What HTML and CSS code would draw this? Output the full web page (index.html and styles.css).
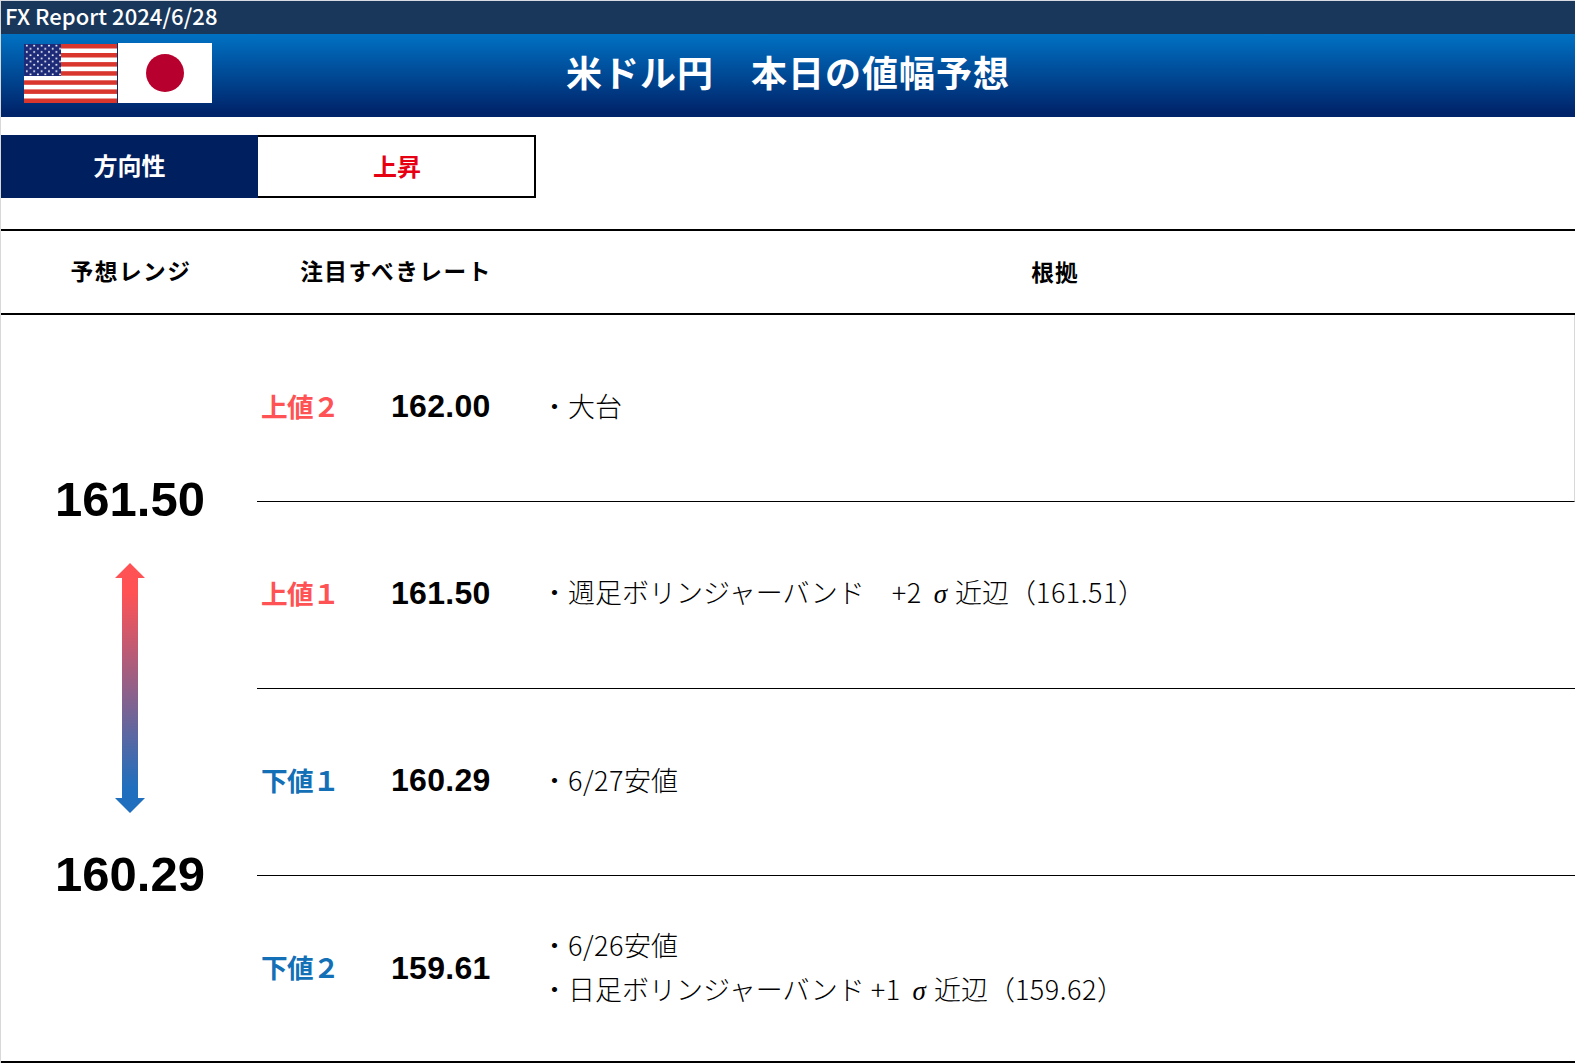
FILE: index.html
```html
<!DOCTYPE html>
<html lang="ja">
<head>
<meta charset="utf-8">
<title>FX Report</title>
<link rel="stylesheet" href="styles.css">
</head>
<body>
<div class="page">
  <div class="topbar">FX Report 2024/6/28</div>
  <header class="hero">
    <div class="flags">
      <svg class="flag-us" width="94" height="60" viewBox="0 0 94 60">
        <defs>
          <pattern id="stars" width="7.4" height="6.4" patternUnits="userSpaceOnUse" x="1" y="1">
            <circle cx="1.8" cy="1.6" r="1" fill="#fff"/>
            <circle cx="5.5" cy="4.8" r="1" fill="#fff"/>
          </pattern>
        </defs>
        <rect x="0" y="1" width="93" height="59" fill="#fff"/>
        <g fill="#d9362e">
          <rect x="0" y="1" width="93" height="4.5"/>
          <rect x="0" y="10" width="93" height="4.5"/>
          <rect x="0" y="19.1" width="93" height="4.5"/>
          <rect x="0" y="28.2" width="93" height="4.5"/>
          <rect x="0" y="37.3" width="93" height="4.5"/>
          <rect x="0" y="46.4" width="93" height="4.5"/>
          <rect x="0" y="55.5" width="93" height="4.5"/>
        </g>
        <rect x="0" y="1" width="37" height="32" fill="#1c2a78"/>
        <rect x="0" y="1" width="37" height="32" fill="url(#stars)"/>
        <rect x="93" y="0" width="1" height="60" fill="#0b2a63"/>
      </svg>
      <svg class="flag-jp" width="94" height="60" viewBox="0 0 94 60">
        <rect width="94" height="60" fill="#fff"/>
        <circle cx="47" cy="30" r="19" fill="#b7002d"/>
      </svg>
    </div>
    <h1 class="title">米ドル円　本日の値幅予想</h1>
  </header>

  <div class="direction">
    <div class="direction-label">方向性</div>
    <div class="direction-value">上昇</div>
  </div>

  <div class="table-head">
    <div class="head-range">予想レンジ</div>
    <div class="head-rate">注目すべきレート</div>
    <div class="head-basis">根拠</div>
  </div>

  <div class="table-body">
    <div class="range">
      <div class="range-number">161.50</div>
      <svg class="range-arrow" width="30" height="250" viewBox="0 0 30 250">
        <defs>
          <linearGradient id="arrowfill" x1="0" y1="0" x2="0" y2="1">
            <stop offset="0.12" stop-color="#ff5255"/>
            <stop offset="0.9" stop-color="#1f6fbe"/>
          </linearGradient>
        </defs>
        <path d="M15 0 L30 15 L23 15 L23 235 L30 235 L15 250 L0 235 L7 235 L7 15 L0 15 Z" fill="url(#arrowfill)"/>
      </svg>
      <div class="range-number">160.29</div>
    </div>
    <div class="rows">
      <div class="row row-first">
        <div class="level up">上値２</div>
        <div class="rate">162.00</div>
        <div class="basis"><p>・大台</p></div>
      </div>
      <div class="row">
        <div class="level up">上値１</div>
        <div class="rate">161.50</div>
        <div class="basis"><p>・週足ボリンジャーバンド　<span class="num">+2</span><span class="sigma">σ</span>近辺（<span class="num">161.51</span>）</p></div>
      </div>
      <div class="row">
        <div class="level down">下値１</div>
        <div class="rate">160.29</div>
        <div class="basis"><p>・<span class="num">6/27</span>安値</p></div>
      </div>
      <div class="row">
        <div class="level down">下値２</div>
        <div class="rate">159.61</div>
        <div class="basis"><p>・<span class="num">6/26</span>安値</p><p>・日足ボリンジャーバンド <span class="num">+1</span><span class="sigma">σ</span>近辺（<span class="num">159.62</span>）</p></div>
      </div>
    </div>
  </div>
</div>
</body>
</html>
```

FILE: styles.css
```css
* { box-sizing: border-box; margin: 0; padding: 0; }
html, body { background: #fff; }
body { font-family: "Liberation Sans", "Noto Sans CJK JP", sans-serif; color: #000; }
.page {
  width: 1575px;
  height: 1063px;
  overflow: hidden;
  border-top: 1px solid #d8dce2;
  border-left: 1px solid #d8d8d8;
}
.topbar {
  height: 33px;
  background: #18375b;
  color: #fff;
  font-family: "Noto Sans CJK JP", sans-serif;
  font-size: 22px;
  line-height: 28px;
  font-weight: 500;
  letter-spacing: 0.05px;
  padding-left: 4px;
}
.hero {
  height: 83px;
  background: linear-gradient(#0071c3 0%, #00246a 95%, #00246a 100%);
  display: flex;
  align-items: center;
  position: relative;
  padding-left: 23px;
}
.flags { display: flex; margin-top: -5px; }
.flag-us, .flag-jp { display: block; }
.title {
  position: absolute;
  left: 0;
  right: 0;
  top: 0;
  text-align: center;
  color: #fff;
  font-size: 36px;
  line-height: 82px;
  font-weight: 700;
  letter-spacing: 1px;
}
.direction {
  display: flex;
  height: 63px;
  width: 535px;
  margin-top: 18px;
  font-size: 24px;
  font-weight: 700;
  text-align: center;
}
.direction-label { width: 257px; background: #001f5f; color: #fff; line-height: 64px; }
.direction-value { width: 278px; border: 2px solid #000; border-left: 0; color: #e60012; line-height: 62px; padding-left: 2px; }
.table-head {
  display: flex;
  margin-top: 31px;
  height: 86px;
  border-top: 2px solid #000;
  border-bottom: 2px solid #000;
  font-size: 22.67px;
  font-weight: 700;
  line-height: 82px;
  text-align: center;
}
.head-range { width: 256px; letter-spacing: 1.5px; padding-left: 4px; }
.head-rate { width: 278px; letter-spacing: 1.5px; }
.head-basis { flex: 1; line-height: 84px; letter-spacing: 1px; }
.table-body { display: flex; height: 748px; border-bottom: 2px solid #000; }
.range {
  width: 256px;
  display: flex;
  flex-direction: column;
  align-items: center;
  padding-top: 152px;
  padding-left: 2px;
}
.range-number {
  font-size: 49px;
  font-weight: 700;
  line-height: 64px;
}
.range-arrow { display: block; margin: 32px 0 29px; }
.rows { flex: 1; display: flex; flex-direction: column; }
.row {
  height: 187px;
  flex: none;
  display: flex;
  align-items: center;
  padding-bottom: 4px;
  border-bottom: 1px solid #000;
}
.row-first { border-right: 1px solid #d8d8d8; }
.row:last-child { border-bottom: 0; height: 185px; padding-bottom: 2px; }
.level { width: 134px; padding-left: 4px; padding-bottom: 2px; font-size: 26.67px; font-weight: 700; letter-spacing: -0.7px; }
.level.up { color: #ff5255; }
.level.down { color: #1470b6; }
.rate { width: 150px; padding-top: 1px; font-size: 32px; font-weight: 700; letter-spacing: 0.3px; }
.basis { font-family: "Noto Sans CJK JP", sans-serif; font-size: 27px; line-height: 44px; font-weight: 300; }
.num { letter-spacing: 0.5px; }
.sigma { font-family: "Liberation Serif", serif; font-style: italic; margin: 0 8px 0 12px; }
```
